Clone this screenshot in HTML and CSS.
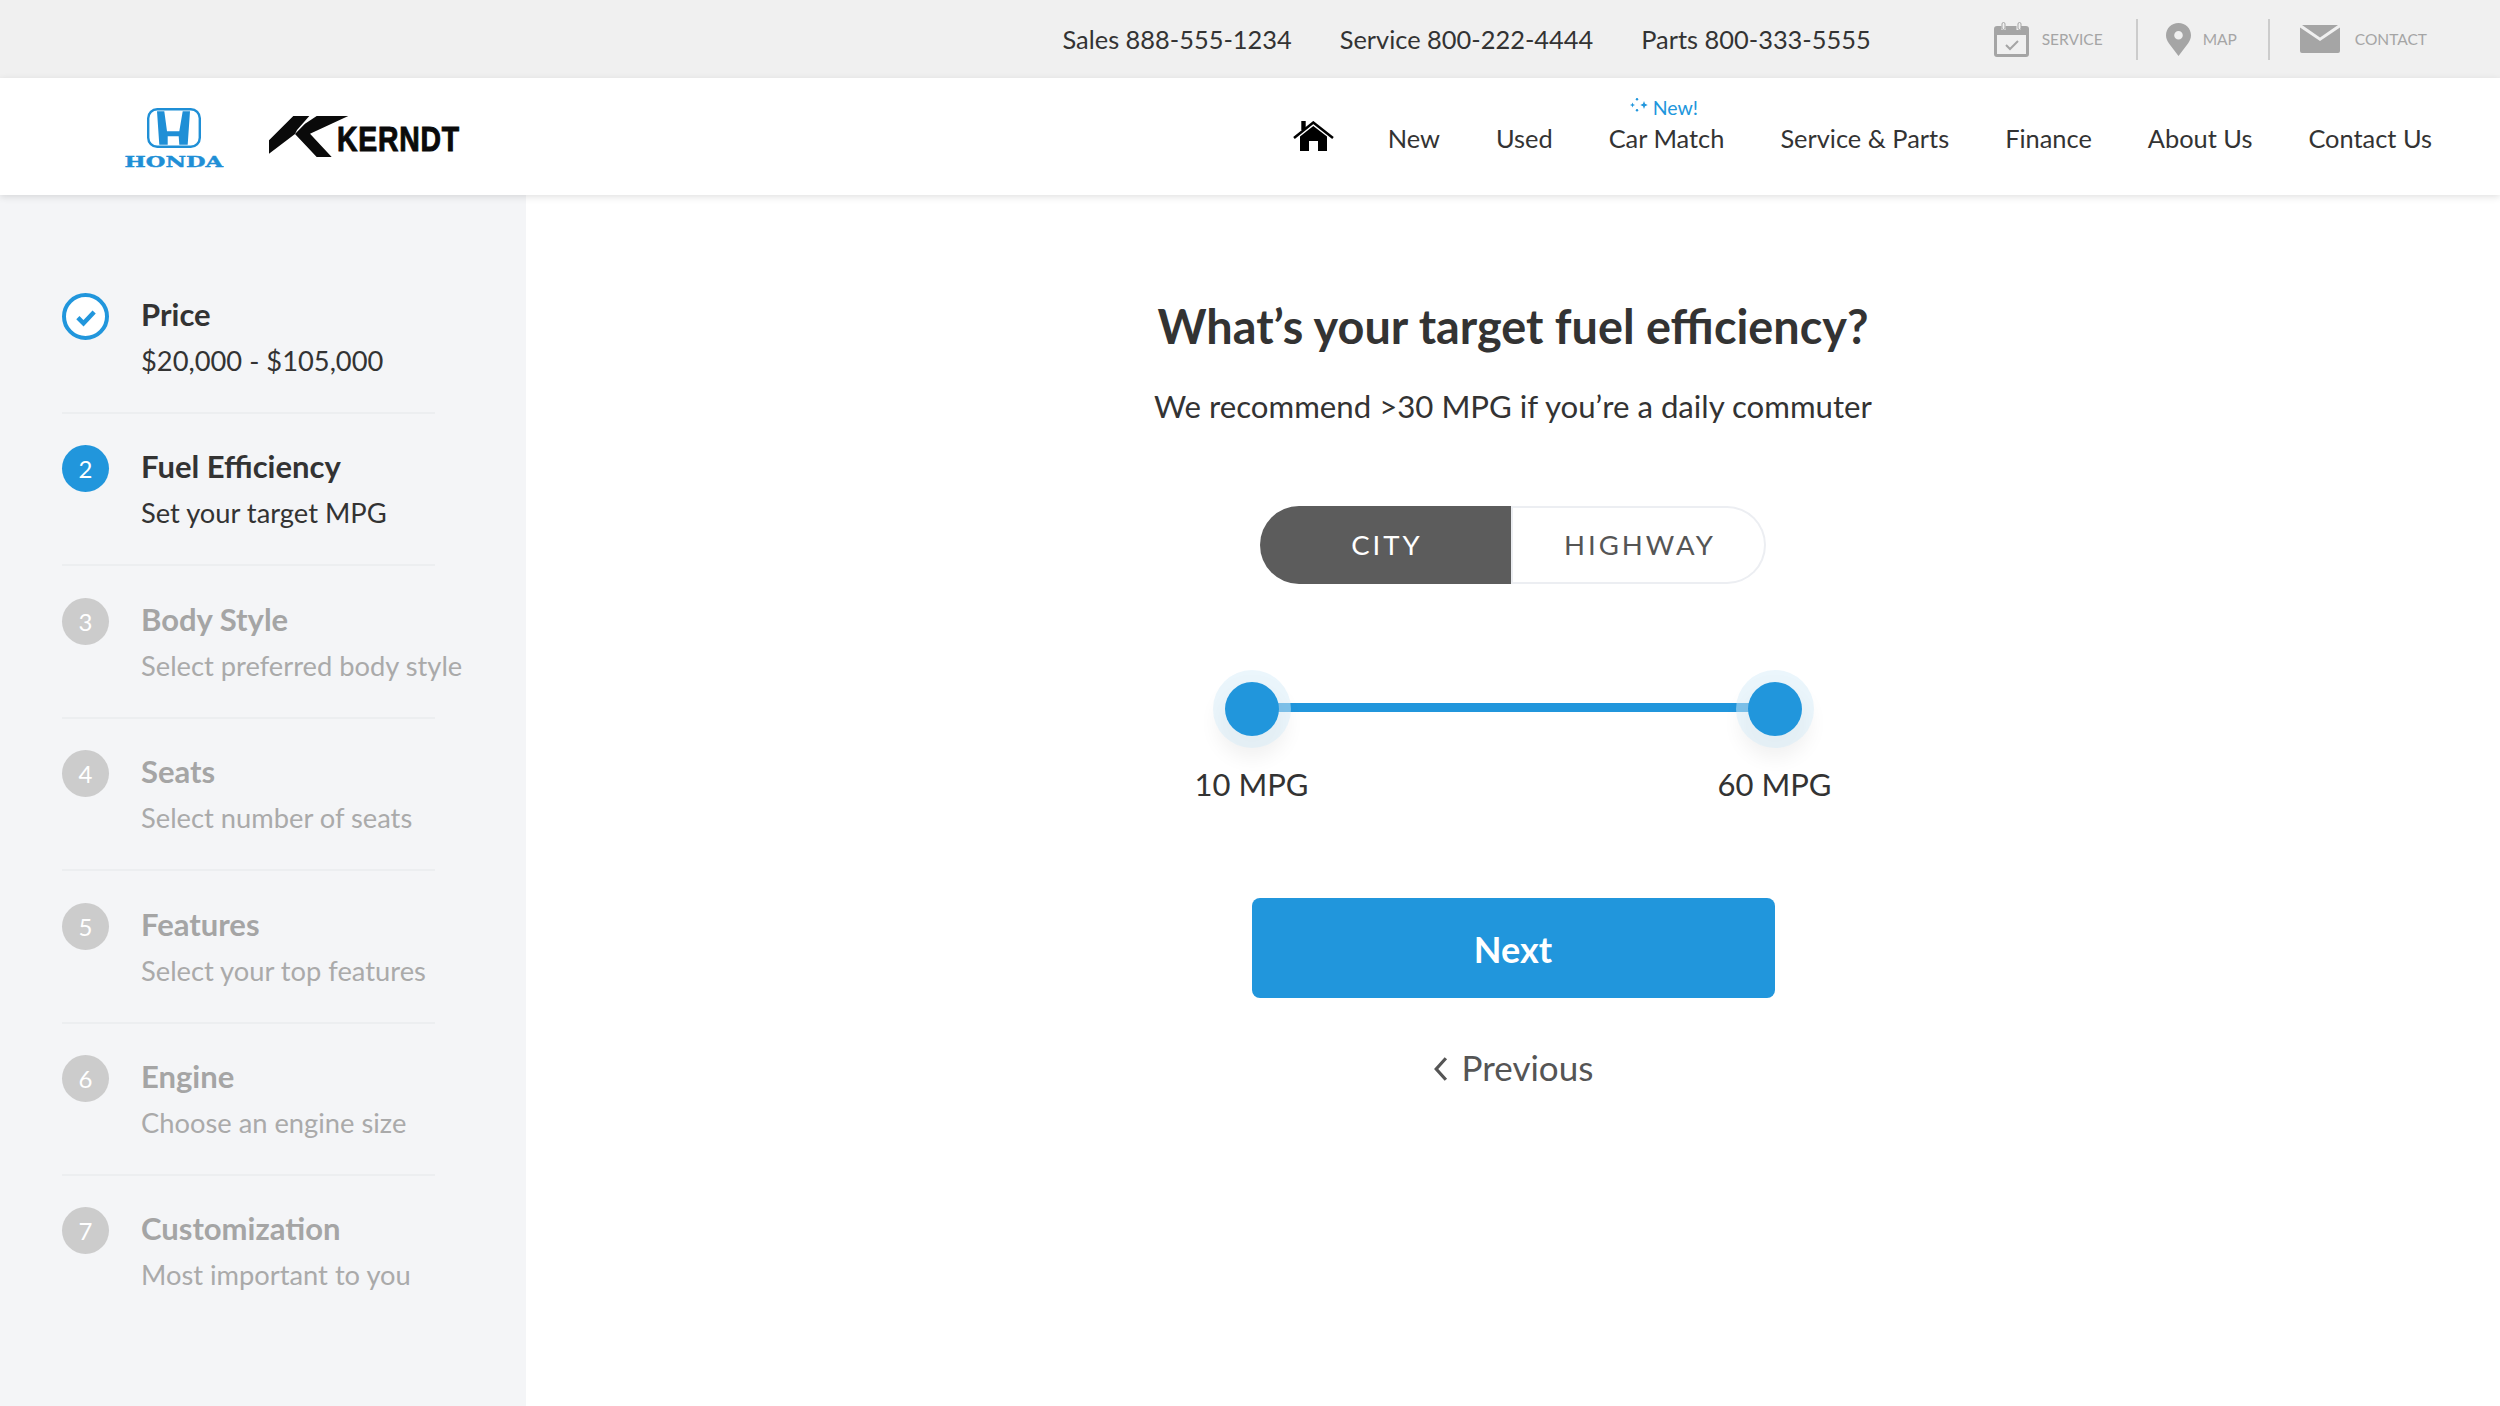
FILE: index.html
```html
<!DOCTYPE html>
<html lang="en">
<head>
<meta charset="UTF-8" />
<meta name="viewport" content="width=device-width, initial-scale=1.0" />
<title>Car Match - Fuel Efficiency</title>
<link rel="stylesheet" href="styles.css">
</head>
<body>
<div class="topbar">
  <span class="phone">Sales 888-555-1234</span>
  <span class="phone">Service 800-222-4444</span>
  <span class="phone">Parts 800-333-5555</span>
  <div class="quick-links">
    <a class="quick-link">
      <svg class="ico-cal" viewBox="0 0 35 35"><path fill="#a5a5a5" d="M3 4h4.500v4h4V4h11v4h4V4H32a3 3 0 0 1 3 3v25a3 3 0 0 1-3 3H3a3 3 0 0 1-3-3V7a3 3 0 0 1 3-3z"/><rect x="8" y="0.500" width="3" height="7" rx="1.500" fill="#f0f0f0" stroke="#a5a5a5"/><rect x="24" y="0.500" width="3" height="7" rx="1.500" fill="#f0f0f0" stroke="#a5a5a5"/><rect x="3" y="13" width="29" height="19" fill="#f0f0f0"/><path d="M12 23l4 4 8-8" fill="none" stroke="#a5a5a5" stroke-width="2"/></svg>
      <span>SERVICE</span>
    </a>
    <a class="quick-link">
      <svg class="ico-pin" viewBox="0 0 25 33"><path fill="#a5a5a5" fill-rule="evenodd" d="M12.500 0C19.400 0 25 5.400 25 12.200c0 3-1.200 5.600-3 8.400L12.500 33 3 20.600C1.200 17.800 0 15.200 0 12.200 0 5.400 5.600 0 12.500 0zm0 8a4.300 4.300 0 1 0 0 8.600 4.300 4.300 0 0 0 0-8.600z"/></svg>
      <span>MAP</span>
    </a>
    <a class="quick-link">
      <svg class="ico-mail" viewBox="0 0 40 28"><path fill="#a5a5a5" d="M2 0h36L20 12.500zM0 2.500V26a2 2 0 0 0 2 2h36a2 2 0 0 0 2-2V2.500L20 16z"/></svg>
      <span>CONTACT</span>
    </a>
  </div>
</div>

<header class="nav">
  <div class="logos">
    <div class="honda">
      <svg class="honda-mark" viewBox="0 0 54 40"><rect x="1.200" y="1.200" width="51.600" height="37.600" rx="9" fill="none" stroke="#1f8fd6" stroke-width="2.400"/><path fill="#1f8fd6" d="M10 3.300h7.300L20 23.300h12.300l3.400-20H43l-2.300 33.400h-8.400l-.6-8.400h-11v8.400h-8.400z"/></svg>
      <span class="honda-name">HONDA</span>
    </div>
    <div class="kerndt">
      <svg class="kerndt-mark" viewBox="0 0 80 42"><path fill="#0a0a0a" d="M0 24.300L24.300 0h16L28 14l-2 4L0 37.700z"/><path fill="#0a0a0a" d="M26 18l10-10.300L47.700 0h31.600L41 17.700 62.700 41h-15z"/></svg>
      <span class="kerndt-name">KERNDT</span>
    </div>
  </div>
  <nav class="menu">
    <svg class="ico-home" viewBox="0 0 41 30"><path d="M1 17L20.300 1.500 40 17" fill="none" stroke="#000" stroke-width="2.500"/><path fill="#000" d="M8.300 0h4.400v9H8.300zM20.300 5L34 15.500V30h-9V20h-9v10H7V15.500z"/></svg>
    <a>New</a>
    <a>Used</a>
    <a class="has-badge">
      <span class="badge">
        <svg class="ico-spark" viewBox="0 0 18 16"><path fill="#2196dc" d="M14 4l1 2.700L17.700 8 15 9.300 14 12l-1-2.700L10.300 8 13 6.700zM2.500 5.500l.7 1.800L5 8l-1.800.7-.7 1.800-.7-1.800L0 8l1.800-.7z"/><circle cx="7" cy="2.300" r="1.200" fill="#2196dc"/><circle cx="7" cy="13.300" r="1.200" fill="#2196dc"/></svg>
        New!
      </span>
      Car Match
    </a>
    <a>Service &amp; Parts</a>
    <a>Finance</a>
    <a>About Us</a>
    <a>Contact Us</a>
  </nav>
</header>

<div class="page">
  <aside class="sidebar">
    <div class="step done">
      <div class="step-num"><svg viewBox="0 0 24 24"><path d="M5.500 12.500l4.500 4.500 8.500-9" fill="none" stroke="#2196dc" stroke-width="3.600"/></svg></div>
      <div class="step-text"><div class="step-title">Price</div><div class="step-sub">$20,000 - $105,000</div></div>
    </div>
    <div class="step current">
      <div class="step-num">2</div>
      <div class="step-text"><div class="step-title">Fuel Efficiency</div><div class="step-sub">Set your target MPG</div></div>
    </div>
    <div class="step">
      <div class="step-num">3</div>
      <div class="step-text"><div class="step-title">Body Style</div><div class="step-sub">Select preferred body style</div></div>
    </div>
    <div class="step">
      <div class="step-num">4</div>
      <div class="step-text"><div class="step-title">Seats</div><div class="step-sub">Select number of seats</div></div>
    </div>
    <div class="step">
      <div class="step-num">5</div>
      <div class="step-text"><div class="step-title">Features</div><div class="step-sub">Select your top features</div></div>
    </div>
    <div class="step">
      <div class="step-num">6</div>
      <div class="step-text"><div class="step-title">Engine</div><div class="step-sub">Choose an engine size</div></div>
    </div>
    <div class="step last">
      <div class="step-num">7</div>
      <div class="step-text"><div class="step-title">Customization</div><div class="step-sub">Most important to you</div></div>
    </div>
  </aside>

  <main class="main">
    <h1>What’s your target fuel efficiency?</h1>
    <p class="lead">We recommend &gt;30 MPG if you’re a daily commuter</p>

    <div class="toggle">
      <div class="toggle-btn on">CITY</div>
      <div class="toggle-btn">HIGHWAY</div>
    </div>

    <div class="slider">
      <div class="track"></div>
      <div class="knob knob-left"></div>
      <div class="knob knob-right"></div>
    </div>
    <div class="slider-labels">
      <span>10 MPG</span>
      <span>60 MPG</span>
    </div>

    <button class="next-btn">Next</button>
    <a class="prev-link">
      <svg class="ico-prev" viewBox="0 0 14 24"><path d="M12 2L3 12l9 10" fill="none" stroke="#555" stroke-width="3"/></svg>
      Previous
    </a>
  </main>
</div>
</body>
</html>
```

FILE: styles.css
```css
* { box-sizing: border-box; margin: 0; padding: 0; }
html, body { height: 100%; }
body { font-family: Lato, "Open Sans", sans-serif; background: #fff; color: #333; min-height: 1406px; display: flex; flex-direction: column; overflow: hidden; }

/* top strip */
.topbar { height: 78px; background: #f0f0f0; display: flex; align-items: center; justify-content: flex-end; padding-right: 73px; }
.phone { font-size: 25.400px; color: #333; margin-right: 48px; white-space: nowrap; }
.phone:nth-child(3) { margin-right: 123px; }
.quick-links { display: flex; align-items: center; height: 41px; }
.quick-link { display: flex; align-items: center; gap: 13px; height: 41px; font-size: 15.500px; color: #a5a5a5; padding-right: 33px; margin-right: 28px; border-right: 2px solid #ccc; }
.quick-link:nth-child(2) { gap: 12px; padding-right: 31px; margin-right: 30px; }
.quick-link:last-child { border-right: none; padding-right: 0; margin-right: 0; gap: 15px; }
.quick-link svg { flex-shrink: 0; }
.ico-cal { width: 35px; height: 35px; }
.ico-pin { width: 25px; height: 33px; }
.ico-mail { width: 40px; height: 28px; }

/* main nav */
.nav { height: 117px; background: #fff; display: flex; align-items: center; justify-content: space-between; padding: 0 68px 0 125px; box-shadow: 0 2px 7px rgba(0,0,0,0.12); position: relative; z-index: 2; }
.logos { display: flex; align-items: center; gap: 46px; }
.honda { display: flex; flex-direction: column; align-items: center; width: 98px; padding-top: 2px; }
.honda-mark { width: 54px; height: 40px; }
.honda-name { font-family: "DejaVu Serif", serif; font-weight: 700; font-size: 15px; line-height: 12px; color: #1f8fd6; margin-top: 8px; -webkit-text-stroke: 0.4px #1f8fd6; transform: scaleX(1.5); }
.kerndt { display: flex; align-items: flex-start; }
.kerndt-mark { width: 80px; height: 42px; }
.kerndt-name { font-family: "Liberation Sans", sans-serif; font-weight: 700; font-size: 35px; line-height: 36px; color: #0a0a0a; margin: 5px 0 0 -12px; letter-spacing: 1px; -webkit-text-stroke: 1px #0a0a0a; transform: scaleX(0.81); transform-origin: left center; width: 123px; white-space: nowrap; }
.menu { display: flex; align-items: center; gap: 56px; font-size: 25.400px; color: #333; white-space: nowrap; margin-top: 3px; }
.ico-home { width: 41px; height: 30px; margin-top: -4px; margin-right: -2px; }
.has-badge { position: relative; }
.badge { position: absolute; left: 21px; top: -27px; font-size: 19.500px; color: #2196dc; display: flex; align-items: center; gap: 5px; }
.ico-spark { width: 18px; height: 16px; margin-top: -6px; }

/* page body */
.page { flex: 1; display: flex; }
.sidebar { width: 526px; flex-shrink: 0; background: #f4f5f7; padding: 98px 0 0 62px; }
.step { width: 373px; height: 121px; margin-bottom: 31.400px; display: flex; gap: 32px; border-bottom: 2px solid #eceef0; }
.step.last { border-bottom: none; }
.step-num { width: 47px; height: 47px; border-radius: 50%; background: #ccc; color: #fff; font-size: 24px; display: flex; align-items: center; justify-content: center; flex-shrink: 0; }
.step.current .step-num { background: #2196dc; }
.step.done .step-num { background: #fff; border: 4px solid #2196dc; }
.step.done .step-num svg { width: 30px; height: 30px; }
.step-text { white-space: nowrap; }
.step-title { font-size: 31px; font-weight: 700; line-height: 42px; color: #a5a5a5; }
.step-sub { font-size: 27.300px; line-height: 51px; color: #aaa; }
.step.done .step-title, .step.current .step-title { color: #333; }
.step.done .step-sub, .step.current .step-sub { color: #333; }

.main { flex: 1; display: flex; flex-direction: column; align-items: center; padding-top: 102px; }
h1 { font-size: 46.800px; font-weight: 700; line-height: 59px; color: #333; }
.lead { font-size: 31.200px; line-height: 44px; margin-top: 28px; color: #333; }

.toggle { display: flex; width: 506px; height: 78px; margin-top: 78px; font-size: 27.500px; letter-spacing: 3px; }
.toggle-btn { flex: 1; display: flex; align-items: center; justify-content: center; color: #555; border: 2px solid #eceef2; border-left: none; border-radius: 0 39px 39px 0; padding: 0 0 2px 3px; }
.toggle-btn.on { background: #5c5c5c; color: #fff; flex: 0 0 253px; border: none; border-right: 2px solid #eceef2; border-radius: 39px 0 0 39px; }

.slider { width: 523px; height: 76px; margin-top: 87px; position: relative; display: flex; align-items: center; }
.track { width: 100%; height: 9px; background: #2196dc; margin-top: -3px; }
.knob { position: absolute; top: 11px; width: 54px; height: 54px; border-radius: 50%; background: #2196dc; box-shadow: 0 0 0 12px rgba(33,150,220,0.09), 0 0 0 12px rgba(255,255,255,0.45), 0 14px 20px 8px rgba(0,0,0,0.06); }
.knob-left { left: -27px; }
.knob-right { right: -27px; }
.slider-labels { width: 639px; display: flex; justify-content: space-between; margin-top: 17px; font-size: 31px; line-height: 40px; color: #333; }
.slider-labels span { width: 116px; text-align: center; white-space: nowrap; }

.next-btn { width: 523px; height: 100px; margin-top: 94px; padding-top: 2px; border: none; border-radius: 8px; background: #2196dc; color: #fff; font-family: Lato, sans-serif; font-size: 36px; font-weight: 700; }
.prev-link { display: flex; align-items: center; gap: 14px; margin-top: 45px; font-size: 35px; line-height: 48px; color: #555; }
.ico-prev { width: 15px; height: 26px; margin-top: 3px; }
```
